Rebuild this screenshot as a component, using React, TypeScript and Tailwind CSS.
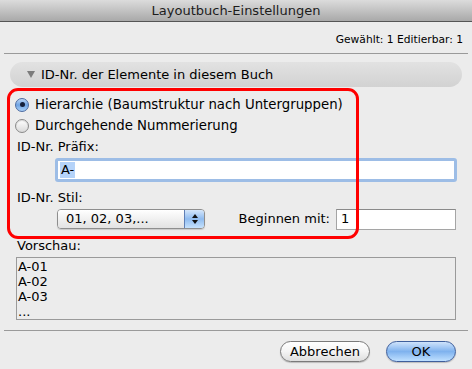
import React from 'react';

const font = { fontFamily: '"DejaVu Sans", "Liberation Sans", sans-serif' };

const Radio = ({ checked, label }: { checked?: boolean; label: string }) => (
  <label className="flex items-center gap-[6px] h-[21px] text-[13.3px]">
    {checked ? (
      <span className="w-[14px] h-[14px] rounded-full border border-[#4b6aa0] bg-gradient-to-b from-[#bcd6f5] via-[#6fa3e3] to-[#a9d0f8] flex items-center justify-center">
        <span className="w-[5px] h-[5px] rounded-full bg-[#15203a]" />
      </span>
    ) : (
      <span className="w-[14px] h-[14px] rounded-full border border-[#8a8a8a] bg-gradient-to-b from-[#ffffff] to-[#d9d9d9] shadow-[inset_0_1px_1px_rgba(0,0,0,0.15)]" />
    )}
    <span>{label}</span>
  </label>
);

export default function App() {
  return (
    <div
      className="w-[472px] h-[369px] bg-[#ececec] text-[13px] leading-[16px] text-black flex flex-col relative overflow-hidden"
      style={font}
    >
      {/* title bar */}
      <div className="h-[22px] shrink-0 bg-gradient-to-b from-[#dcdcdc] to-[#a9a9a9] border-b border-[#555] flex items-center justify-center text-[#1c1c1c]">
        Layoutbuch-Einstellungen
      </div>

      <div className="mt-[10px] text-right pr-[9px] text-[10.7px] leading-[16px]">Gewählt: 1 Editierbar: 1</div>
      <div className="mt-[5px] mx-[4px] h-px bg-[#9a9a9a]" />

      {/* disclosure */}
      <div className="mt-[8px] mx-[10px] h-[25px] shrink-0 rounded-full bg-gradient-to-b from-[#e2e2e2] to-[#d2d2d2] flex items-center pl-[17px] gap-[6px]">
        <svg width="8" height="7" viewBox="0 0 8 7">
          <path d="M0 0 H8 L4 7 Z" fill="#7c7c7c" />
        </svg>
        <span>ID-Nr. der Elemente in diesem Buch</span>
      </div>

      <div className="pl-[15px] pr-[15px] mt-[7px] flex flex-col">
        <Radio checked label="Hierarchie (Baumstruktur nach Untergruppen)" />
        <Radio label="Durchgehende Nummerierung" />

        <div className="pl-[2px] mt-[3px] h-[16px]">ID-Nr. Präfix:</div>
        <div className="pl-[40px] mt-[3px]">
          <div className="h-[24px] rounded-[3px] border-[3px] border-[#9dbde6] bg-white flex items-center">
            <span className="ml-[2px] bg-[#b5d3f9] px-[1px]">A-</span>
          </div>
        </div>

        <div className="pl-[2px] mt-[8px] h-[16px]">ID-Nr. Stil:</div>
        <div className="flex items-center mt-[2px] h-[22px] pr-[1px]">
          <div className="ml-[42px] w-[148px] h-[20px] flex rounded-[4px] border border-[#8e8e8e] overflow-hidden shadow-[0_1px_1px_rgba(0,0,0,0.15)]">
            <div className="flex-1 bg-gradient-to-b from-[#ffffff] to-[#e2e2e2] flex items-center pl-[8px]">
              01, 02, 03,...
            </div>
            <div className="w-[20px] border-l border-[#5f7fb5] bg-gradient-to-b from-[#d5e6fa] via-[#8fbbef] to-[#c6e2fd] flex flex-col items-center justify-center gap-[2px]">
              <svg width="6" height="4" viewBox="0 0 6 4">
                <path d="M0 4 L3 0 L6 4 Z" fill="#111" />
              </svg>
              <svg width="6" height="4" viewBox="0 0 6 4">
                <path d="M0 0 L6 0 L3 4 Z" fill="#111" />
              </svg>
            </div>
          </div>
          <span className="ml-auto mr-[6px] whitespace-nowrap">Beginnen mit:</span>
          <div className="w-[120px] h-[21px] bg-white border border-[#a5a5a5] border-t-[#8a8a8a] flex items-center pl-[4px]">
            1
          </div>
        </div>

        <div className="pl-[2px] mt-[8px] h-[16px]">Vorschau:</div>
        <div className="mt-[3px] h-[63px] border border-[#9a9a9a] px-[1px] leading-[15px] flex flex-col pt-[1px] mr-[1px] ml-[1px]">
          <span>A-01</span>
          <span>A-02</span>
          <span>A-03</span>
          <span>...</span>
        </div>
      </div>

      <div className="mt-[10px] mx-[4px] h-px bg-[#9a9a9a]" />

      <div className="flex justify-end gap-[16px] pr-[16px] mt-[10px]">
        <button className="w-[90px] h-[21px] rounded-full border border-[#7a7a7a] bg-gradient-to-b from-[#ffffff] via-[#f4f4f4] to-[#dedede] flex items-center justify-center shadow-[0_1px_1px_rgba(0,0,0,0.2)]">
          Abbrechen
        </button>
        <button className="w-[70px] h-[21px] rounded-full border border-[#3f5f9c] bg-gradient-to-b from-[#cfe3fb] via-[#7fb2ee] to-[#bfe0ff] flex items-center justify-center shadow-[0_1px_1px_rgba(0,0,0,0.2)]">
          OK
        </button>
      </div>

      {/* red annotation frame */}
      <div className="absolute left-[7px] top-[88px] w-[352px] h-[151px] border-[3px] border-[#ff0000] rounded-[11px] pointer-events-none" />
    </div>
  );
}
